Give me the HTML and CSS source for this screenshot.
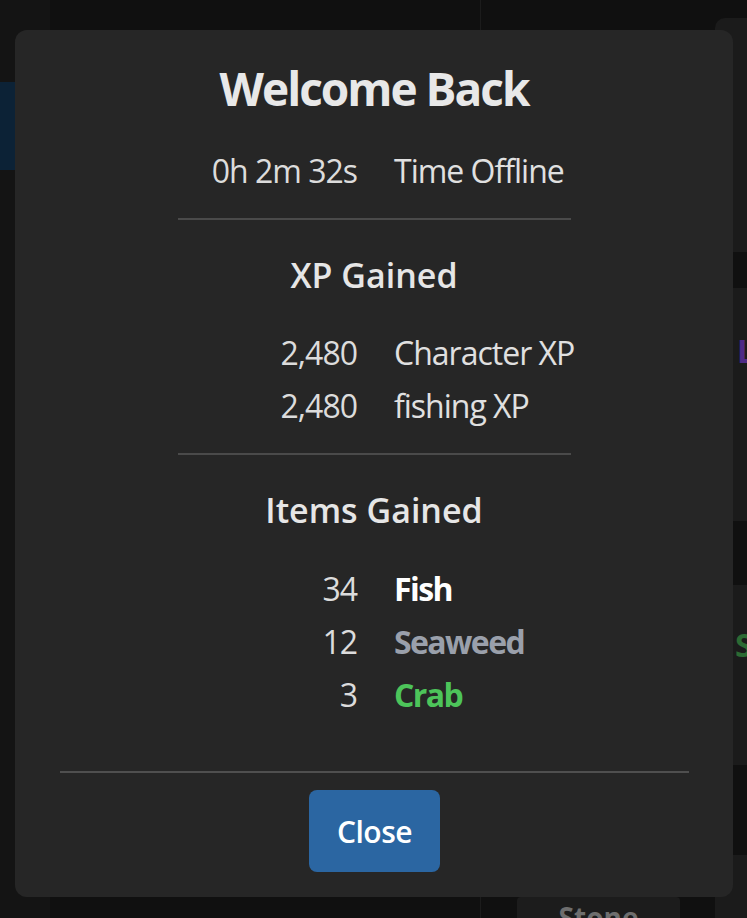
FILE: index.html
```html
<!DOCTYPE html>
<html lang="en">
<head>
  <meta charset="UTF-8">
  <meta name="viewport" content="width=device-width, initial-scale=1.0">
  <title>Welcome Back</title>
  <link rel="stylesheet" href="styles.css">
</head>
<body>
  <!-- game screen behind the dialog -->
  <div class="app">
    <aside class="sidebar">
      <div class="nav-item active"></div>
    </aside>
    <main class="main">
      <div class="main-left"></div>
      <div class="main-right">
        <div class="action-btn">Stone</div>
      </div>
    </main>
    <section class="side-panel">
      <div class="panel-card first"></div>
      <div class="panel-card"><span class="skill purple">Lumber</span></div>
      <div class="panel-card"><span class="skill green">Smithing</span></div>
      <div class="panel-card last"></div>
    </section>
  </div>

  <!-- offline progress dialog -->
  <div class="modal">
    <div class="modal-body">
      <h1>Welcome Back</h1>
      <div class="stats time">
        <span class="num">0h 2m 32s</span>
        <span class="label">Time Offline</span>
      </div>

      <hr>

      <h2>XP Gained</h2>
      <div class="stats">
        <span class="num">2,480</span>
        <span class="label">Character XP</span>
        <span class="num">2,480</span>
        <span class="label">fishing XP</span>
      </div>

      <hr>

      <h2>Items Gained</h2>
      <div class="stats items">
        <span class="num">34</span>
        <span class="label item common">Fish</span>
        <span class="num">12</span>
        <span class="label item junk">Seaweed</span>
        <span class="num">3</span>
        <span class="label item uncommon">Crab</span>
      </div>
    </div>
    <div class="modal-footer">
      <button class="btn-close">Close</button>
    </div>
  </div>
</body>
</html>
```

FILE: styles.css
```css
html, body {
  margin: 0;
  padding: 0;
  height: 100%;
  overflow: hidden;
}
body {
  font-family: "Open Sans", "Noto Sans", Arial, sans-serif;
  background-color: #101010;
  color: #e0e0e0;
}

/* background app (dimmed) */
.app {
  display: flex;
  height: 918px;
  overflow: hidden;
}
.sidebar {
  width: 50px;
  background-color: #141414;
  padding-top: 82px;
}
.nav-item.active {
  height: 88px;
  background-color: #0c2236;
}
.main {
  flex: 1;
  display: flex;
}
.main-left {
  width: 430px;
  border-right: 1px solid #1c1c1c;
}
.main-right {
  flex: 1;
  padding: 897px 0 0 36px;
  box-sizing: border-box;
  height: 918px;
}
.action-btn {
  width: 163px;
  height: 21px;
  overflow: hidden;
  border-radius: 4px 4px 0 0;
  background-color: #1c1c1c;
  color: #6e6e6e;
  font-weight: 700;
  font-size: 28px;
  line-height: 40px;
  text-align: center;
}
.side-panel {
  width: 32px;
  padding-top: 18px;
  display: flex;
  flex-direction: column;
}
.panel-card {
  flex-shrink: 0;
  box-sizing: border-box;
  background-color: #1b1b1b;
  overflow: hidden;
  white-space: nowrap;
  height: 233px;
  margin-bottom: 64px;
  padding: 41px 0 0 22px;
}
.panel-card.first {
  height: 234px;
  margin-bottom: 36px;
  border-radius: 10px 0 0 0;
}
.panel-card:nth-child(3) {
  height: 180px;
  margin-bottom: 90px;
  padding: 38px 0 0 20px;
}
.panel-card.last {
  height: 63px;
  margin-bottom: 0;
}
.skill {
  font-weight: 700;
  font-size: 32px;
}
.skill.purple { color: #4f2a86; }
.skill.green { color: #2c6a33; }

/* dialog */
.modal {
  position: absolute;
  left: 15px;
  top: 30px;
  width: 718px;
  height: 867px;
  background-color: #262626;
  border-radius: 12px;
  display: flex;
  flex-direction: column;
}
.modal-body {
  flex: 1;
  padding-top: 31px;
  text-align: center;
}
.modal h1 {
  margin: 0;
  font-size: 46px;
  line-height: 55px;
  font-weight: 700;
  letter-spacing: -2px;
  color: #e8e8e8;
}
.modal h2 {
  margin: 35px 0 0;
  font-size: 34px;
  line-height: 41px;
  font-weight: 600;
  color: #e6e6e6;
}
.stats {
  display: grid;
  grid-template-columns: 1fr 1fr;
  column-gap: 37px;
  padding-left: 3px;
  margin-top: 30px;
  font-size: 32px;
  line-height: 53px;
  letter-spacing: -1px;
}
.stats.time {
  margin-top: 28px;
}
.stats.items {
  margin-top: 31px;
}
.stats .num {
  text-align: right;
  color: #dcdcdc;
}
.stats .label {
  text-align: left;
  color: #e0e0e0;
}
.item {
  font-weight: 700;
  letter-spacing: -1.6px;
}
.item.common { color: #ffffff; }
.item.junk { color: #9aa0ab; }
.item.uncommon { color: #4dc45a; }

.modal hr {
  width: 393px;
  margin: 21px auto 0;
  border: none;
  border-top: 2px solid #4a4a4a;
}
.modal hr + h2 {
  margin-top: 35px;
}
.modal-footer {
  margin: 0 44px 0 45px;
  border-top: 2px solid #4f4f4f;
  padding: 17px 0 25px;
  display: flex;
  justify-content: center;
}
.btn-close {
  height: 82px;
  padding: 0 28px;
  border: none;
  border-radius: 8px;
  background-color: #2b66a2;
  color: #ffffff;
  font-family: inherit;
  font-size: 30px;
  font-weight: 600;
  letter-spacing: -0.5px;
  cursor: pointer;
}
```
